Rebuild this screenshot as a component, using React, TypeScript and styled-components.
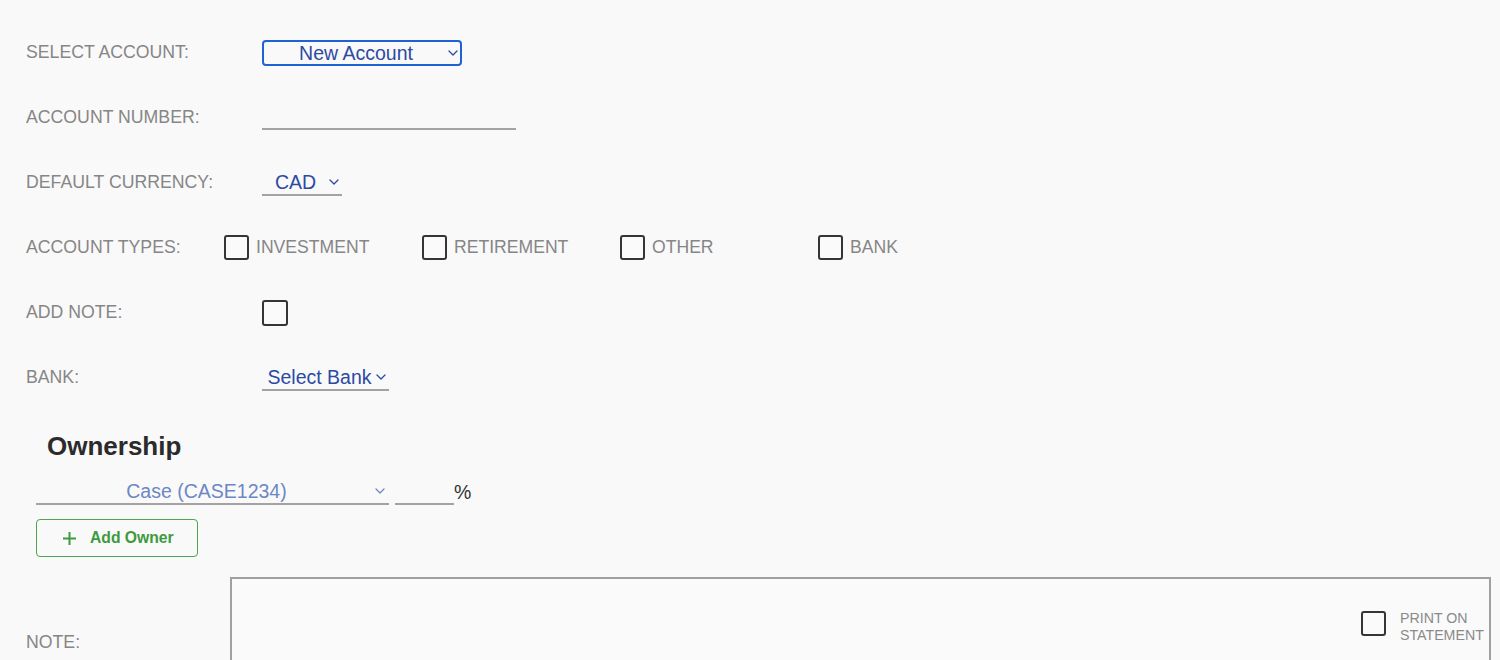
import React from "react";
import styled, { createGlobalStyle } from "styled-components";

const Global = createGlobalStyle`
  html, body { margin: 0; padding: 0; background: #f9f9f9; }
  body { font-family: "Liberation Sans", Arial, sans-serif; overflow: hidden; }
  * { box-sizing: border-box; }
`;

const Page = styled.div`
  padding: 20px 0 0 26px;
  width: 1500px;
  height: 660px;
  overflow: hidden;
`;

const Row = styled.div`
  display: flex;
  align-items: center;
  height: 65px;
`;

const Label = styled.div<{ $w?: number }>`
  width: ${(p) => p.$w ?? 236}px;
  flex: none;
  font-size: 17.7px;
  color: #868686;
  text-transform: uppercase;
  white-space: nowrap;
`;

const SelectBox = styled.div<{
  $w: number;
  $boxed?: boolean;
  $light?: boolean;
  $pl: number;
  $gap: number;
  $pr: number;
}>`
  width: ${(p) => p.$w}px;
  height: 26px;
  flex: none;
  display: flex;
  align-items: center;
  gap: ${(p) => p.$gap}px;
  font-size: 19.5px;
  white-space: nowrap;
  color: ${(p) => (p.$light ? "#6d87c4" : "#2c4aa2")};
  padding: 0 ${(p) => p.$pr}px 0 ${(p) => p.$pl}px;
  ${(p) =>
    p.$boxed
      ? `border: 2px solid #1f62d8; border-radius: 4px;`
      : `border-bottom: 2px solid #a3a3a3;`}
`;

const SelectText = styled.span`
  flex: 1;
  text-align: center;
  line-height: 22px;
`;

const ChevronWrap = styled.span`
  display: inline-flex;
  flex: none;
`;

const Chevron = () => (
  <ChevronWrap>
    <svg width="10" height="6" viewBox="0 0 10 6" fill="none">
      <path d="M1 1l4 4 4-4" stroke="currentColor" strokeWidth="1.3" strokeLinecap="round" strokeLinejoin="round" />
    </svg>
  </ChevronWrap>
);

const UnderlineInput = styled.input<{ $w: number }>`
  width: ${(p) => p.$w}px;
  height: 24px;
  flex: none;
  border: none;
  border-bottom: 2px solid #a3a3a3;
  background: transparent;
  font-family: inherit;
  font-size: 19px;
  outline: none;
  padding: 0;
`;

const CheckGroup = styled.div`
  display: flex;
  align-items: center;
`;

const CheckOption = styled.label`
  width: 198px;
  display: flex;
  align-items: center;
  gap: 7px;
  font-size: 17.6px;
  color: #868686;
`;

const Box = styled.span<{ $size?: number }>`
  width: ${(p) => p.$size ?? 25}px;
  height: ${(p) => p.$size ?? 25}px;
  flex: none;
  border: 2px solid #353535;
  border-radius: 3px;
  background: #fafafa;
`;

const Section = styled.div`
  padding: 21px 0 0 10px;
`;

const Heading = styled.h2`
  margin: 0 0 18px 11px;
  font-size: 26px;
  line-height: 30px;
  font-weight: 700;
  color: #2b2b2b;
`;

const OwnerRow = styled.div`
  display: flex;
  align-items: flex-end;
  gap: 6px;
`;

const Percent = styled.span`
  font-size: 19.5px;
  color: #333;
  margin-left: -6px;
  line-height: 26px;
`;

const AddButton = styled.button`
  margin-top: 14px;
  width: 162px;
  height: 38px;
  display: flex;
  align-items: center;
  gap: 13px;
  padding: 0 0 0 25px;
  border: 1.5px solid #4fa550;
  border-radius: 4px;
  background: transparent;
  color: #3e9a3f;
  font-family: inherit;
  font-size: 15.7px;
  font-weight: 700;
  cursor: pointer;
`;

const NoteRow = styled.div`
  display: flex;
  align-items: center;
  margin-top: 20px;
  margin-left: -10px;
`;

const NoteBox = styled.div`
  width: 1261px;
  height: 130px;
  flex: none;
  display: flex;
  border: 2px solid #a0a0a0;
  background: #fafafa;
`;

const NoteArea = styled.textarea`
  flex: 1;
  border: none;
  background: transparent;
  resize: none;
  outline: none;
  font-family: inherit;
  font-size: 16px;
`;

const PrintOption = styled.label`
  align-self: flex-start;
  margin-top: 32px;
  display: flex;
  align-items: flex-start;
  gap: 14px;
  width: 128px;
  font-size: 14.2px;
  line-height: 17px;
  color: #8a8a8a;
  text-transform: uppercase;
`;

const PrintText = styled.span`
  margin-top: -1px;
`;

export default function App() {
  return (
    <>
      <Global />
      <Page>
        <Row>
          <Label>Select Account:</Label>
          <SelectBox $w={200} $boxed $pl={10} $gap={10} $pr={2}>
            <SelectText>New Account</SelectText>
            <Chevron />
          </SelectBox>
        </Row>
        <Row>
          <Label>Account Number:</Label>
          <UnderlineInput $w={254} />
        </Row>
        <Row>
          <Label>Default Currency:</Label>
          <SelectBox $w={80} $pl={7} $gap={7} $pr={3}>
            <SelectText>CAD</SelectText>
            <Chevron />
          </SelectBox>
        </Row>
        <Row>
          <Label $w={198}>Account Types:</Label>
          <CheckGroup>
            {["INVESTMENT", "RETIREMENT", "OTHER", "BANK"].map((t) => (
              <CheckOption key={t}>
                <Box />
                {t}
              </CheckOption>
            ))}
          </CheckGroup>
        </Row>
        <Row>
          <Label>Add Note:</Label>
          <Box $size={26} />
        </Row>
        <Row>
          <Label>Bank:</Label>
          <SelectBox $w={127} $pl={3} $gap={2} $pr={3}>
            <SelectText>Select Bank</SelectText>
            <Chevron />
          </SelectBox>
        </Row>
        <Section>
          <Heading>Ownership</Heading>
          <OwnerRow>
            <SelectBox $w={353} $light $pl={12} $gap={10} $pr={4}>
              <SelectText>Case (CASE1234)</SelectText>
              <Chevron />
            </SelectBox>
            <UnderlineInput $w={59} />
            <Percent>%</Percent>
          </OwnerRow>
          <AddButton>
            <svg width="15" height="15" viewBox="0 0 15 15" fill="none">
              <path d="M7.5 1v13M1 7.5h13" stroke="#3e9a3f" strokeWidth="2" />
            </svg>
            Add Owner
          </AddButton>
          <NoteRow>
            <Label $w={204}>Note:</Label>
            <NoteBox>
              <NoteArea />
              <PrintOption>
                <Box />
                <PrintText>Print on statement</PrintText>
              </PrintOption>
            </NoteBox>
          </NoteRow>
        </Section>
      </Page>
    </>
  );
}
